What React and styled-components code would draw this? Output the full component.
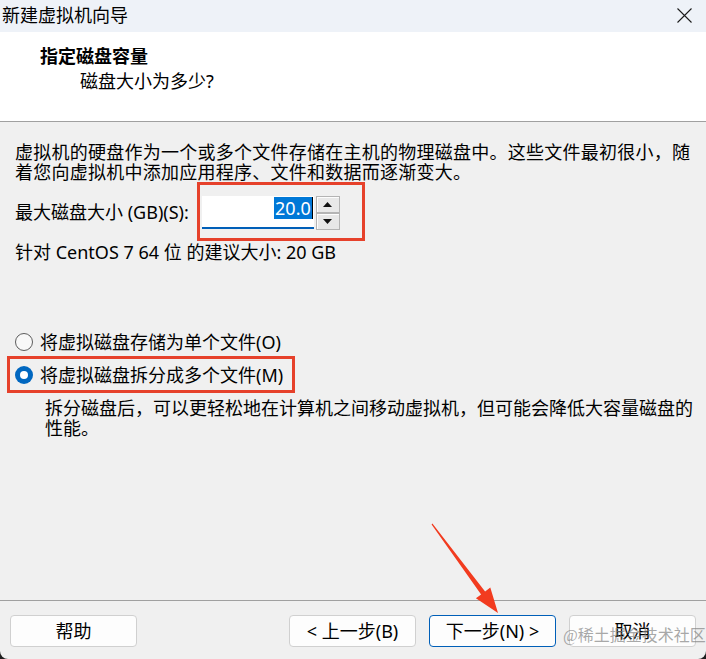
import React from "react";
import styled, { createGlobalStyle, css } from "styled-components";

const FONT = `"Noto Sans", "Noto Sans CJK SC", sans-serif`;

const GlobalStyle = createGlobalStyle`
  html, body { margin: 0; padding: 0; background: #1f1f1f; }
  body { font-family: ${FONT}; }
  * { box-sizing: border-box; }
`;

const Window = styled.div`
  position: relative;
  width: 706px;
  height: 659px;
  display: flex;
  flex-direction: column;
  background: #f0f0f0;
  border-radius: 0 0 8px 8px;
  overflow: hidden;
  font-family: ${FONT};
  font-size: 18px;
  line-height: 20px;
  color: #000;
`;

const TitleBar = styled.div`
  height: 32px;
  flex: none;
  display: flex;
  align-items: center;
  justify-content: space-between;
  padding: 0 14px 2px 2px;
  background: #eef2f8;
`;

const Title = styled.span`
  font-size: 18px;
  white-space: nowrap;
`;

const CloseButton = styled.button`
  width: 15px;
  height: 15px;
  padding: 0;
  border: 0;
  background: none;
  display: flex;
`;

const Header = styled.div`
  height: 90px;
  flex: none;
  background: #fff;
  border-bottom: 1px solid #a0a0a0;
  padding: 13px 0 0 40px;
`;

const Heading = styled.div`
  font-weight: 700;
  line-height: 22px;
`;

const Subtitle = styled.div`
  margin: 3px 0 0 40px;
  line-height: 22px;
`;

const Body = styled.div`
  flex: 1;
  padding: 20px 10px 0 15px;
  display: flex;
  flex-direction: column;
  align-items: flex-start;
`;

const Text = styled.p`
  margin: ${(p) => p.$margin || "0"};
  letter-spacing: ${(p) => p.$spacing || 0}px;
  white-space: nowrap;
`;

const SizeRow = styled.div`
  display: flex;
  align-items: center;
  gap: 8px;
`;

const Highlight = styled.div`
  display: flex;
  align-items: ${(p) => p.$align || "center"};
  border: 3px solid #e6412b;
  padding: ${(p) => p.$pad};
  margin: ${(p) => p.$margin || "0"};
`;

const NumberField = styled.div`
  width: 112px;
  height: 33px;
  background: #fff;
  border-bottom: 2px solid #005fb8;
  display: flex;
  justify-content: flex-end;
  align-items: flex-start;
  padding: 1px 1px 0 0;
`;

const Selected = styled.span`
  background: #0078d7;
  color: #fff;
  line-height: 22px;
  padding: 0 1px;
`;

const Caret = styled.span`
  width: 1px;
  height: 22px;
  background: #000;
`;

const Spinner = styled.div`
  width: 24px;
  height: 34px;
  margin-left: 2px;
  display: flex;
  flex-direction: column;
`;

const SpinButton = styled.div`
  flex: 1;
  border: 1px solid #b4b4b4;
  background: #e8e8e8;
  box-shadow: inset 1px 1px 0 #fdfdfd;
  display: flex;
  align-items: center;
  justify-content: center;
`;

const RadioRow = styled.div`
  display: flex;
  align-items: center;
  gap: 7px;
  height: 24px;
  margin: ${(p) => p.$margin || "0"};
  white-space: nowrap;
`;

const RadioMark = styled.span`
  width: 18px;
  height: 18px;
  flex: none;
  border-radius: 50%;
  display: flex;
  align-items: center;
  justify-content: center;
  ${(p) =>
    p.$checked
      ? css`
          background: #0067c0;
          &::after {
            content: "";
            width: 8px;
            height: 8px;
            border-radius: 50%;
            background: #fff;
          }
        `
      : css`
          border: 1px solid #5c5c5c;
          background: #f8f8f8;
        `}
`;

const Footer = styled.div`
  height: 59px;
  flex: none;
  border-top: 1px solid #a0a0a0;
  padding: 14px 10px 12px 10px;
  display: flex;
  gap: 13px;
`;

const Spacer = styled.div`
  flex: 1;
`;

const Button = styled.button`
  width: 127px;
  height: 32px;
  padding: 0;
  border-radius: 4px;
  border: 1px solid ${(p) => (p.$primary ? "#005fb8" : "#d0d0d0")};
  background: #fdfdfd;
  font-family: ${FONT};
  font-size: 18px;
  line-height: 20px;
  color: #000;
  white-space: nowrap;
`;

const Watermark = styled.div`
  position: absolute;
  left: 563px;
  top: 626px;
  font-family: "Liberation Serif", "Noto Sans CJK SC", serif;
  font-size: 16px;
  line-height: 20px;
  color: rgba(130, 130, 130, 0.7);
  white-space: nowrap;
  pointer-events: none;
`;

const ArrowLayer = styled.svg`
  position: absolute;
  left: 0;
  top: 0;
  pointer-events: none;
`;

const Tri = ({ up }) => (
  <svg width="9" height="5" viewBox="0 0 9 5">
    <polygon points={up ? "0,5 9,5 4.5,0" : "0,0 9,0 4.5,5"} fill="#111" />
  </svg>
);

export default function App() {
  return (
    <>
      <GlobalStyle />
      <Window>
        <TitleBar>
          <Title>新建虚拟机向导</Title>
          <CloseButton aria-label="关闭">
            <svg width="15" height="15" viewBox="0 0 15 15">
              <path d="M0.5 0.5 L14.5 14.5 M14.5 0.5 L0.5 14.5" stroke="#1b1b1b" strokeWidth="1.1" />
            </svg>
          </CloseButton>
        </TitleBar>

        <Header>
          <Heading>指定磁盘容量</Heading>
          <Subtitle>磁盘大小为多少?</Subtitle>
        </Header>

        <Body>
          <Text $spacing={0.25}>
            虚拟机的硬盘作为一个或多个文件存储在主机的物理磁盘中。这些文件最初很小，随
            <br />
            着您向虚拟机中添加应用程序、文件和数据而逐渐变大。
          </Text>

          <SizeRow>
            <span>最大磁盘大小 (GB)(S):</span>
            <Highlight $align="flex-start" $pad="11px 22px 8px 2px">
              <NumberField>
                <Selected>20.0</Selected>
                <Caret />
              </NumberField>
              <Spinner>
                <SpinButton>
                  <Tri up />
                </SpinButton>
                <SpinButton>
                  <Tri />
                </SpinButton>
              </Spinner>
            </Highlight>
          </SizeRow>

          <Text $margin="1px 0 0 0">针对 CentOS 7 64 位 的建议大小: 20 GB</Text>

          <RadioRow $margin="68px 0 0 0">
            <RadioMark />
            <span>将虚拟磁盘存储为单个文件(O)</span>
          </RadioRow>

          <Highlight $pad="4px 9px 3px 5px" $margin="2px 0 0 -8px">
            <RadioRow>
              <RadioMark $checked />
              <span>将虚拟磁盘拆分成多个文件(M)</span>
            </RadioRow>
          </Highlight>

          <Text $margin="5px 0 0 30px">
            拆分磁盘后，可以更轻松地在计算机之间移动虚拟机，但可能会降低大容量磁盘的
            <br />
            性能。
          </Text>
        </Body>

        <Footer>
          <Button>帮助</Button>
          <Spacer />
          <Button>&lt; 上一步(B)</Button>
          <Button $primary>下一步(N) &gt;</Button>
          <Button>取消</Button>
        </Footer>

        <Watermark>@稀土掘金技术社区</Watermark>

        <ArrowLayer width="706" height="659" viewBox="0 0 706 659">
          <polygon
            points="431.6,524.4 481.1,594.4 475.9,598.3 498,613 490.3,587.5 485.1,591.4 432.4,523.6"
            fill="#f23b1f"
          />
        </ArrowLayer>
      </Window>
    </>
  );
}
